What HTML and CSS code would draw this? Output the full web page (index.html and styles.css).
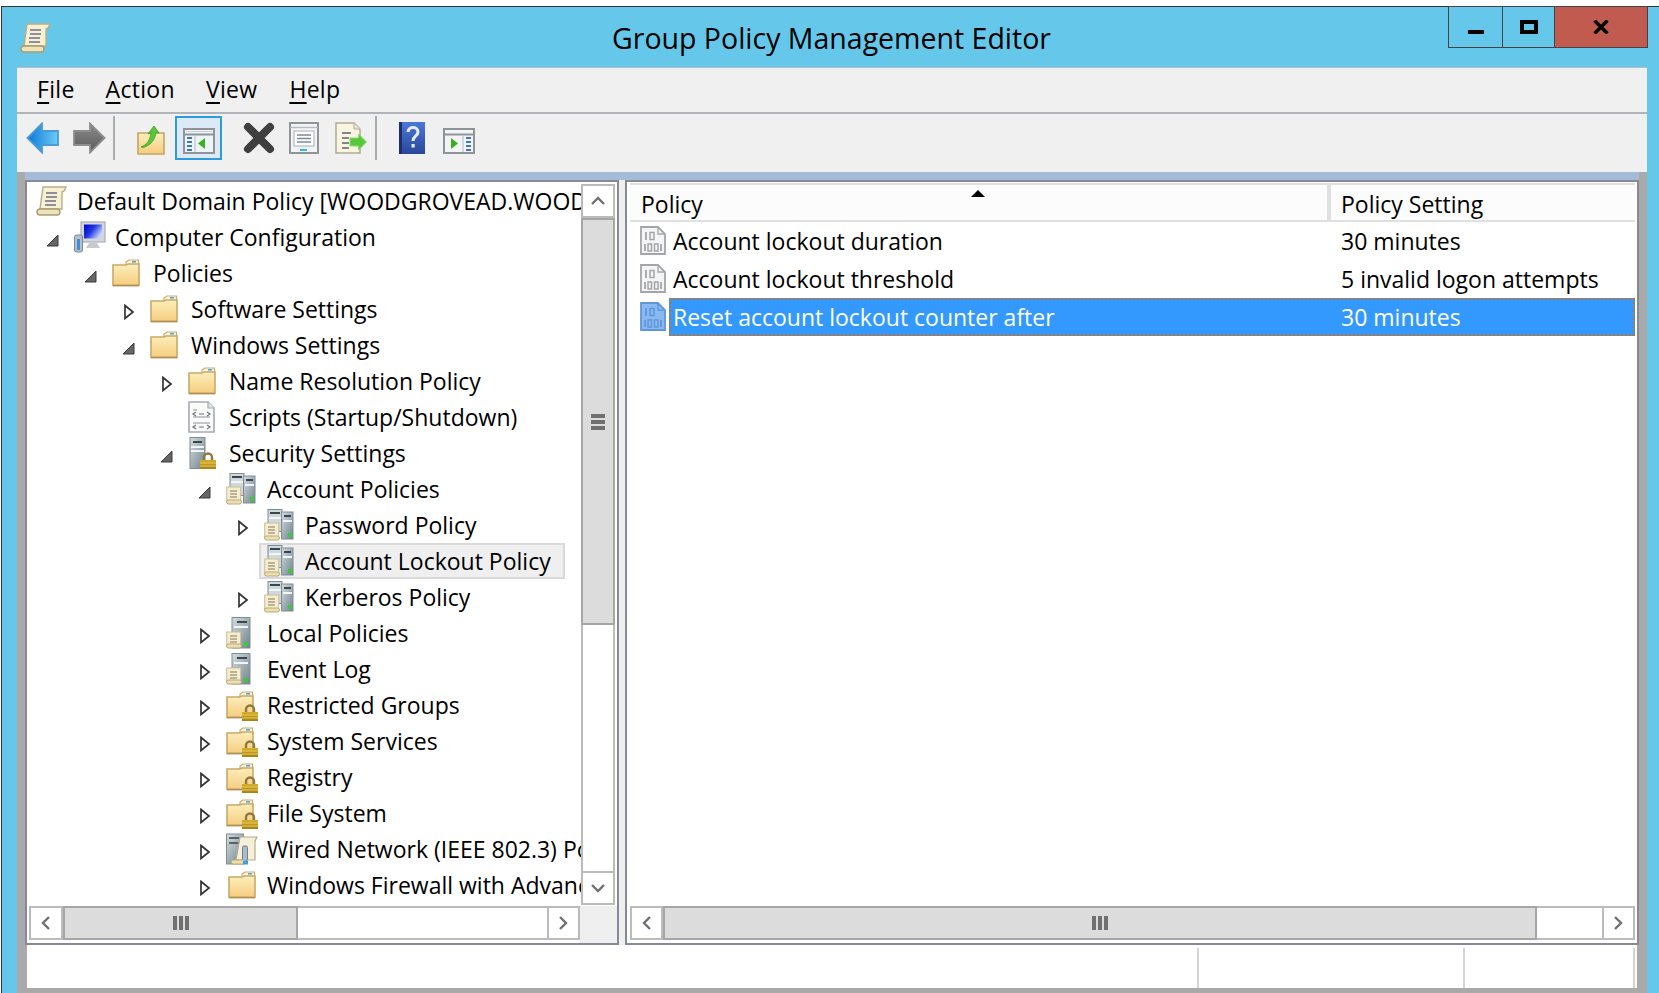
FILE: index.html
```html
<!DOCTYPE html>
<html lang="en">
<head>
<meta charset="utf-8">
<title>Group Policy Management Editor</title>
<link rel="stylesheet" href="styles.css">
</head>
<body>
<svg class="sprite" xmlns="http://www.w3.org/2000/svg">
  <defs>
    <linearGradient id="gFolder" x1="0" y1="0" x2="0" y2="1"><stop offset="0" stop-color="#fdeebb"/><stop offset="1" stop-color="#f5cd7e"/></linearGradient>
    <linearGradient id="gTower" x1="0" y1="0" x2="1" y2="1"><stop offset="0" stop-color="#d5dde0"/><stop offset="1" stop-color="#6f838c"/></linearGradient>
    <linearGradient id="gLock" x1="0" y1="0" x2="0" y2="1"><stop offset="0" stop-color="#d6ae2c"/><stop offset="1" stop-color="#a68210"/></linearGradient>
    <linearGradient id="gBlue" x1="0" y1="0" x2="1" y2="0"><stop offset="0" stop-color="#0a78d8"/><stop offset="1" stop-color="#6fcbf5"/></linearGradient>
    <linearGradient id="gGray" x1="0" y1="0" x2="0" y2="1"><stop offset="0" stop-color="#8a8a8a"/><stop offset="1" stop-color="#5c5c5c"/></linearGradient>
    <linearGradient id="gHelp" x1="0" y1="0" x2="0" y2="1"><stop offset="0" stop-color="#4a78d8"/><stop offset="1" stop-color="#2a4699"/></linearGradient>
    <linearGradient id="gScreen" x1="0" y1="0" x2="1" y2="0.600"><stop offset="0" stop-color="#0000d0"/><stop offset=".5" stop-color="#2038e0"/><stop offset="1" stop-color="#c8d4f8"/></linearGradient>
  </defs>

  <symbol id="open" viewBox="0 0 14 16"><path d="M12 3v11H1z" fill="#666" stroke="#3a3a3a" stroke-width="1"/></symbol>
  <symbol id="closed" viewBox="0 0 14 16"><path d="M3 1.500l8 6.500-8 6.500z" fill="#fff" stroke="#333" stroke-width="1.700"/></symbol>

  <symbol id="scroll" viewBox="0 0 32 32">
    <path d="M7 2h23l-2 4-2 1v17H4z" fill="#f7f1d2" stroke="#b8ad8a" stroke-width="1.400"/>
    <path d="M10 8h11M10 12h11M9 16h11M9 20h11" stroke="#8e8e9c" stroke-width="1.800"/>
    <rect x="1" y="24" width="23" height="6" rx="3" fill="#ece3b6" stroke="#a99b72" stroke-width="1.400"/>
  </symbol>

  <symbol id="folder" viewBox="0 0 32 32">
    <path d="M14 5l3-2h9.500v6H14z" fill="#fdf6dc" stroke="#c9ab6d" stroke-width="1.200"/>
    <rect x="20" y="4" width="4" height="1.600" fill="#4ea6e6"/>
    <path d="M1 8h13l2-1h11v21.500H1z" fill="url(#gFolder)" stroke="#c8a96a" stroke-width="1.600"/>
    <path d="M1 28.500h26" stroke="#ad8f54" stroke-width="1.500"/>
  </symbol>

  <symbol id="lock" viewBox="0 0 32 32">
    <path d="M20 24v-3.500a4 4 0 0 1 8 0V24" fill="none" stroke="#8c7a3c" stroke-width="2.400"/>
    <rect x="16" y="23" width="16" height="9" fill="url(#gLock)"/>
    <path d="M16 26h16M16 29h16" stroke="#e6ca60" stroke-width="1"/>
  </symbol>

  <symbol id="folderlock" viewBox="0 0 32 32">
    <use href="#folder" width="32" height="32"/>
    <use href="#lock" width="32" height="32"/>
  </symbol>

  <symbol id="tower1" viewBox="0 0 32 32">
    <rect x="6" y="0.500" width="18" height="30.500" fill="url(#gTower)" stroke="#7e8e95" stroke-width="1"/>
    <path d="M11 5h10" stroke="#39474d" stroke-width="2"/>
    <path d="M8 10h14" stroke="#f2f5f6" stroke-width="2"/>
    <rect x="0.700" y="15" width="14" height="13" fill="#f5edcd" stroke="#cdbf94" stroke-width="1"/>
    <path d="M4 19h7M4 22h7M4 25h7" stroke="#a99f86" stroke-width="1.400"/>
    <rect x="0.500" y="27" width="15" height="4" rx="2" fill="#ece0b0" stroke="#b8a878"/>
    <rect x="18" y="25" width="4" height="4" fill="#3ec83a"/>
  </symbol>

  <symbol id="tower2" viewBox="0 0 32 32">
    <rect x="4" y="0.500" width="14" height="22" fill="#cfd8dc" stroke="#7e8e95" stroke-width="1"/>
    <rect x="17.500" y="3" width="11.500" height="27" fill="url(#gTower)" stroke="#7e8e95" stroke-width="1"/>
    <path d="M6 4h10M20 7h7" stroke="#39474d" stroke-width="2"/>
    <path d="M5 9h12M19 12h9" stroke="#f2f5f6" stroke-width="2"/>
    <rect x="0.700" y="14" width="14" height="14" fill="#f5edcd" stroke="#cdbf94" stroke-width="1"/>
    <path d="M4 18h7M4 21h7M4 24h7" stroke="#a99f86" stroke-width="1.400"/>
    <rect x="0.500" y="27" width="15" height="4" rx="2" fill="#ece0b0" stroke="#b8a878"/>
    <rect x="24" y="24" width="4" height="4" fill="#3ec83a"/>
  </symbol>

  <symbol id="seclock" viewBox="0 0 32 32">
    <rect x="2" y="0.500" width="15" height="31" fill="url(#gTower)" stroke="#7e8e95" stroke-width="1"/>
    <path d="M5 5h9" stroke="#39474d" stroke-width="2"/>
    <path d="M3 10h13M3 14h13" stroke="#f2f5f6" stroke-width="2"/>
    <g transform="translate(-4 0)"><use href="#lock" width="32" height="32"/></g>
  </symbol>

  <symbol id="computer" viewBox="0 0 32 32">
    <rect x="7" y="1" width="24" height="20" fill="#d4d8dc" stroke="#9ca2a8" stroke-width="1"/>
    <rect x="10" y="3.500" width="18" height="14" fill="url(#gScreen)"/>
    <path d="M15 22h8l3 5H12z" fill="#c8ccd0"/>
    <rect x="0.500" y="14" width="8" height="17" rx="2" fill="#b6c0c8" stroke="#7d8790"/>
    <rect x="3" y="18" width="3" height="11" fill="#3f8fd8"/>
  </symbol>

  <symbol id="scripts" viewBox="0 0 32 32">
    <path d="M1 1h19l6 6v24H1z" fill="#fbfbfb" stroke="#a6abb0" stroke-width="1.600"/>
    <path d="M20 1v6h6" fill="#e4e6e8" stroke="#a6abb0" stroke-width="1.200"/>
    <path d="M5 9h4M5 16h17M5 22h17" stroke="#8d9299" stroke-width="1.200"/>
    <path d="M8 11l-3 2 3 2M19 11l3 2-3 2M8 24l-3 2 3 2M19 24l3 2-3 2M11 13h5M11 26h5" fill="none" stroke="#6d7279" stroke-width="1.200"/>
  </symbol>

  <symbol id="wired" viewBox="0 0 32 32">
    <rect x="0.500" y="1" width="17" height="30" fill="url(#gTower)" stroke="#7e8e95"/>
    <path d="M3 5h10M3 10h12" stroke="#39474d" stroke-width="1.600"/>
    <path d="M14 4h17l-2 4v19H10z" fill="#f6f0d8" stroke="#b4aa8e" stroke-width="1.200"/>
    <rect x="16.500" y="13" width="5" height="15" rx="1.500" fill="#a9bcc8" stroke="#6e808c"/>
    <rect x="5" y="27" width="14" height="4" rx="2" fill="#ece0b0" stroke="#b8a878"/>
    <rect x="17" y="28" width="5" height="3.500" fill="#3f9fd8"/>
  </symbol>

  <symbol id="bin" viewBox="0 0 26 30">
    <path class="bin-body" d="M1 1h17l7 7v20H1z" stroke="currentColor" stroke-width="1.800"/>
    <path d="M18 1v7h7" fill="none" stroke="currentColor" stroke-width="1.300"/>
    <path d="M6 6v8M5 18v7M21 18v7" stroke="currentColor" stroke-width="1.800"/>
    <rect x="10" y="6.500" width="4" height="7" fill="none" stroke="currentColor" stroke-width="1.500"/>
    <rect x="8" y="18" width="3.500" height="7" fill="none" stroke="currentColor" stroke-width="1.500"/>
    <rect x="14.500" y="18" width="3.500" height="7" fill="none" stroke="currentColor" stroke-width="1.500"/>
  </symbol>
</svg>

<div class="window">
  <header class="titlebar">
    <svg class="title-icon"><use href="#scroll"/></svg>
    <h1 class="title">Group Policy Management Editor</h1>
    <div class="caption">
      <div class="cap cap-min"><svg class="cap-glyph" viewBox="0 0 16 4"><rect width="16" height="4"/></svg></div>
      <div class="cap cap-max"><svg class="cap-glyph cap-glyph-max" viewBox="0 0 18 14"><path d="M2 2h14v10H2z" fill="none" stroke="#000" stroke-width="4"/></svg></div>
      <div class="cap cap-close"><svg class="cap-glyph cap-glyph-x" viewBox="0 0 16 14"><path d="M1.500 0.500L14.500 13.500M14.500 0.500L1.500 13.500" stroke="#000" stroke-width="3.400" fill="none"/></svg></div>
    </div>
  </header>

  <div class="client">
    <nav class="menubar">
      <span class="menu m-file"><span class="ak">F</span>ile</span>
      <span class="menu m-action"><span class="ak">A</span>ction</span>
      <span class="menu m-view"><span class="ak">V</span>iew</span>
      <span class="menu m-help"><span class="ak">H</span>elp</span>
    </nav>

    <div class="toolbar">
      <svg class="tb tb-back" viewBox="0 0 34 32"><path d="M1.500 16L16 1.500V9h16v14H16v7.500z" fill="url(#gBlue)" stroke="#4a9ad8" stroke-width="1.800"/></svg>
      <svg class="tb tb-fwd" viewBox="0 0 34 32"><path d="M32.500 16L18 1.500V9H2v14h16v7.500z" fill="url(#gGray)" stroke="#8e8e8e" stroke-width="1.800"/></svg>
      <span class="tb-sep tb-sep-1"></span>
      <svg class="tb tb-up" viewBox="0 0 28 30">
        <path d="M1 8h26v21H1z" fill="url(#gFolder)" stroke="#c4a564" stroke-width="1.600"/>
        <path d="M4 22C10 20 13 15 14 8l-3 1 6-8 5 7-3-.5c-1 8-6 13-13 15z" fill="#58c83a" stroke="#3c9c28" stroke-width=".8"/>
      </svg>
      <div class="tb-active">
        <svg class="tb tb-console" viewBox="0 0 32 26">
          <rect x="1" y="1" width="30" height="24" fill="#eef3f8" stroke="#8f9498" stroke-width="2"/>
          <path d="M1 6.500h30" stroke="#8f9498" stroke-width="2"/>
          <path d="M3 3.500h26" stroke="#d0d4d8"/>
          <path d="M4 10h5M4 14h5M4 18h5M4 22h5" stroke="#3f78b8" stroke-width="2"/>
          <path d="M12 8v16" stroke="#b8bcc0"/>
          <path d="M22 10v11l-7-5.500z" fill="#38b020"/>
        </svg>
      </div>
      <svg class="tb tb-x" viewBox="0 0 32 32"><path d="M5 5l22 22M27 5L5 27" stroke="#3f3f3f" stroke-width="8" stroke-linecap="round"/></svg>
      <svg class="tb tb-props" viewBox="0 0 30 32">
        <rect x="1" y="1" width="28" height="30" fill="#f2f4f6" stroke="#8f9498" stroke-width="2"/>
        <path d="M1 5.500h28" stroke="#b8bcc0" stroke-width="1.500"/>
        <rect x="5" y="9" width="20" height="15" fill="#fff" stroke="#a8acb0"/>
        <path d="M8 13h14M8 16.500h14M8 20h14" stroke="#7a8a98" stroke-width="1.500"/>
        <rect x="11" y="27" width="7" height="2" fill="#2fb8e8"/>
      </svg>
      <svg class="tb tb-export" viewBox="0 0 32 32">
        <path d="M1 1h18l6 6v24H1z" fill="#f9f5e0" stroke="#b0aa98" stroke-width="1.500"/>
        <path d="M19 1v6h6" fill="#e8e4d0" stroke="#b0aa98"/>
        <path d="M7 11h9M7 16h7M7 21h7M7 26h7" stroke="#5c6068" stroke-width="1.500"/>
        <path d="M31.500 20l-8-8v4H15v8h8.500v4z" fill="#58c83a" stroke="#8cd878"/>
      </svg>
      <span class="tb-sep tb-sep-2"></span>
      <svg class="tb tb-help" viewBox="0 0 26 32">
        <rect width="26" height="32" fill="url(#gHelp)"/>
        <rect x="0" y="0" width="3" height="32" fill="#1c2f74"/>
        <path d="M9 10c0-6 10-6 10 0 0 4-5 4-5 9" fill="none" stroke="#e8ecf8" stroke-width="3"/>
        <rect x="12.500" y="22" width="3.200" height="3.500" fill="#e8ecf8"/>
      </svg>
      <svg class="tb tb-view" viewBox="0 0 32 26">
        <rect x="1" y="1" width="30" height="24" fill="#f2f4f6" stroke="#8f9498" stroke-width="2"/>
        <path d="M1 6.500h30" stroke="#8f9498" stroke-width="2"/>
        <path d="M23 10h5M23 14h5M23 18h5M23 22h5" stroke="#3f78b8" stroke-width="2"/>
        <path d="M20 8v16" stroke="#b8bcc0"/>
        <path d="M8 10v11l7-5.500z" fill="#38b020"/>
      </svg>
    </div>

    <div class="workspace">
      <div class="band"></div>
      <div class="panes">
        <section class="pane pane-tree">
          <ul class="tree">
            <li class="row l0"><span class="exp"></span><span class="node"><svg class="ic"><use href="#scroll"/></svg><span class="label">Default Domain Policy [WOODGROVEAD.WOOD</span></span></li>
            <li class="row l1"><span class="exp"><svg class="tw"><use href="#open"/></svg></span><span class="node"><svg class="ic"><use href="#computer"/></svg><span class="label">Computer Configuration</span></span></li>
            <li class="row l2"><span class="exp"><svg class="tw"><use href="#open"/></svg></span><span class="node"><svg class="ic"><use href="#folder"/></svg><span class="label">Policies</span></span></li>
            <li class="row l3"><span class="exp"><svg class="tw"><use href="#closed"/></svg></span><span class="node"><svg class="ic"><use href="#folder"/></svg><span class="label">Software Settings</span></span></li>
            <li class="row l3"><span class="exp"><svg class="tw"><use href="#open"/></svg></span><span class="node"><svg class="ic"><use href="#folder"/></svg><span class="label">Windows Settings</span></span></li>
            <li class="row l4"><span class="exp"><svg class="tw"><use href="#closed"/></svg></span><span class="node"><svg class="ic"><use href="#folder"/></svg><span class="label">Name Resolution Policy</span></span></li>
            <li class="row l4"><span class="exp"></span><span class="node"><svg class="ic"><use href="#scripts"/></svg><span class="label">Scripts (Startup/Shutdown)</span></span></li>
            <li class="row l4"><span class="exp"><svg class="tw"><use href="#open"/></svg></span><span class="node"><svg class="ic"><use href="#seclock"/></svg><span class="label">Security Settings</span></span></li>
            <li class="row l5"><span class="exp"><svg class="tw"><use href="#open"/></svg></span><span class="node"><svg class="ic"><use href="#tower2"/></svg><span class="label">Account Policies</span></span></li>
            <li class="row l6"><span class="exp"><svg class="tw"><use href="#closed"/></svg></span><span class="node"><svg class="ic"><use href="#tower2"/></svg><span class="label">Password Policy</span></span></li>
            <li class="row l6"><span class="exp"></span><span class="node node-sel"><svg class="ic"><use href="#tower2"/></svg><span class="label">Account Lockout Policy</span></span></li>
            <li class="row l6"><span class="exp"><svg class="tw"><use href="#closed"/></svg></span><span class="node"><svg class="ic"><use href="#tower2"/></svg><span class="label">Kerberos Policy</span></span></li>
            <li class="row l5"><span class="exp"><svg class="tw"><use href="#closed"/></svg></span><span class="node"><svg class="ic"><use href="#tower1"/></svg><span class="label">Local Policies</span></span></li>
            <li class="row l5"><span class="exp"><svg class="tw"><use href="#closed"/></svg></span><span class="node"><svg class="ic"><use href="#tower1"/></svg><span class="label">Event Log</span></span></li>
            <li class="row l5"><span class="exp"><svg class="tw"><use href="#closed"/></svg></span><span class="node"><svg class="ic"><use href="#folderlock"/></svg><span class="label">Restricted Groups</span></span></li>
            <li class="row l5"><span class="exp"><svg class="tw"><use href="#closed"/></svg></span><span class="node"><svg class="ic"><use href="#folderlock"/></svg><span class="label">System Services</span></span></li>
            <li class="row l5"><span class="exp"><svg class="tw"><use href="#closed"/></svg></span><span class="node"><svg class="ic"><use href="#folderlock"/></svg><span class="label">Registry</span></span></li>
            <li class="row l5"><span class="exp"><svg class="tw"><use href="#closed"/></svg></span><span class="node"><svg class="ic"><use href="#folderlock"/></svg><span class="label">File System</span></span></li>
            <li class="row l5"><span class="exp"><svg class="tw"><use href="#closed"/></svg></span><span class="node"><svg class="ic"><use href="#wired"/></svg><span class="label">Wired Network (IEEE 802.3) Po</span></span></li>
            <li class="row l5"><span class="exp"><svg class="tw"><use href="#closed"/></svg></span><span class="node"><svg class="ic"><use href="#folder" x="2"/></svg><span class="label">Windows Firewall with Advanc</span></span></li>
          </ul>

          <div class="vscroll">
            <div class="sb-btn sb-btn-v"><svg class="chev" viewBox="0 0 14 14"><path d="M1 10l6-6 6 6" fill="none" stroke="#707070" stroke-width="2.400"/></svg></div>
            <div class="thumb thumb-v"><span class="grip-v"></span><span class="grip-v"></span><span class="grip-v"></span></div>
            <div class="v-track"></div>
            <div class="sb-btn sb-btn-v"><svg class="chev" viewBox="0 0 14 14"><path d="M1 4l6 6 6-6" fill="none" stroke="#707070" stroke-width="2.400"/></svg></div>
          </div>

          <div class="hscroll hscroll-left">
            <div class="sb-btn sb-btn-h sb-btn-first"><svg class="chev" viewBox="0 0 14 14"><path d="M10 1L4 7l6 6" fill="none" stroke="#707070" stroke-width="2.400"/></svg></div>
            <div class="thumb thumb-h thumb-h-left"><span class="grip-h"></span><span class="grip-h"></span><span class="grip-h"></span></div>
            <div class="h-track"></div>
            <div class="sb-btn sb-btn-h"><svg class="chev" viewBox="0 0 14 14"><path d="M3 1l6 6-6 6" fill="none" stroke="#707070" stroke-width="2.400"/></svg></div>
          </div>
          <div class="corner"></div>
        </section>

        <section class="pane pane-list">
          <div class="lv-head">
            <div class="lv-col lv-col-1">Policy<span class="sort"></span></div>
            <div class="lv-col lv-col-2">Policy Setting</div>
          </div>
          <div class="lv-rows">
            <div class="lv-row">
              <svg class="lv-ic"><use href="#bin"/></svg>
              <div class="lv-cells"><span class="cell cell-1">Account lockout duration</span><span class="cell">30 minutes</span></div>
            </div>
            <div class="lv-row">
              <svg class="lv-ic"><use href="#bin"/></svg>
              <div class="lv-cells"><span class="cell cell-1">Account lockout threshold</span><span class="cell">5 invalid logon attempts</span></div>
            </div>
            <div class="lv-row lv-row-sel">
              <svg class="lv-ic"><use href="#bin"/></svg>
              <div class="lv-cells"><span class="cell cell-1">Reset account lockout counter after</span><span class="cell">30 minutes</span></div>
            </div>
          </div>
          <div class="hscroll hscroll-right">
            <div class="sb-btn sb-btn-h"><svg class="chev" viewBox="0 0 14 14"><path d="M10 1L4 7l6 6" fill="none" stroke="#707070" stroke-width="2.400"/></svg></div>
            <div class="thumb thumb-h thumb-h-right"><span class="grip-h"></span><span class="grip-h"></span><span class="grip-h"></span></div>
            <div class="h-track"></div>
            <div class="sb-btn sb-btn-h"><svg class="chev" viewBox="0 0 14 14"><path d="M3 1l6 6-6 6" fill="none" stroke="#707070" stroke-width="2.400"/></svg></div>
          </div>
        </section>
      </div>

      <footer class="status">
        <div class="st st-1"></div>
        <div class="st st-2"></div>
        <div class="st st-3"></div>
      </footer>
    </div>
  </div>
</div>
</body>
</html>
```
FILE: styles.css
```css
* { box-sizing: border-box; }
html, body { margin: 0; padding: 0; height: 100%; overflow: hidden; background: #fff; }
body {
  font-family: "Open Sans", "Noto Sans", "Liberation Sans", sans-serif;
  font-size: 23px;
  color: #000;
  padding: 6px 0 0 1px;
}
.sprite { position: absolute; width: 0; height: 0; overflow: hidden; }
.bin-body { fill: var(--bin-fill, #f5f5f5); }

.window {
  height: 987px;
  background: #65c8eb;
  border-top: 1px solid #333;
  border-left: 1px solid #333;
  display: flex;
  flex-direction: column;
}

/* title bar */
.titlebar {
  height: 60px;
  flex: none;
  position: relative;
  display: flex;
  justify-content: center;
  padding-left: 2px;
}
.title-icon { position: absolute; left: 18px; top: 15px; width: 32px; height: 32px; }
.title {
  margin: 12px 0 0;
  font-size: 28.500px;
  font-weight: 400;
  line-height: 38px;
  white-space: nowrap;
}
.caption { position: absolute; right: 11px; top: -1px; display: flex; height: 42px; }
.cap {
  height: 42px;
  border: 1px solid #444;
  border-left: 0;
  display: flex;
  align-items: center;
  justify-content: center;
}
.cap-min { width: 55px; border-left: 1px solid #444; }
.cap-max { width: 52px; }
.cap-close { width: 93px; background: #c15b50; }
.cap-glyph { width: 16px; height: 4px; margin-top: 10px; }
.cap-glyph-max { width: 18px; height: 14px; margin-top: 0; }
.cap-glyph-x { width: 16px; height: 14px; margin-top: 0; }

/* client */
.client {
  flex: 1;
  margin: 0 12px 0 15px;
  display: flex;
  flex-direction: column;
  background: #f0f0f0;
  box-shadow: inset 0 1px 0 #b4c0c8;
}
.menubar {
  height: 47px;
  flex: none;
  border-bottom: 2px solid #b1b5b9;
  padding-bottom: 2px;
  display: flex;
  align-items: center;
}
.menu { font-size: 23px; letter-spacing: 0.3px; line-height: 44px; white-space: nowrap; }
.m-file { margin-left: 20px; }
.m-action { margin-left: 31px; }
.m-view { margin-left: 31px; }
.m-help { margin-left: 32px; }
.ak { text-decoration: underline; text-decoration-thickness: 2px; text-underline-offset: 4px; }

.toolbar {
  height: 58px;
  flex: none;
  padding-bottom: 10px;
  display: flex;
  align-items: center;
}
.tb { display: block; flex: none; }
.tb-back { width: 34px; height: 32px; margin-left: 9px; }
.tb-fwd { width: 34px; height: 32px; margin-left: 12px; }
.tb-sep { width: 2px; height: 44px; background: #a9adb0; flex: none; }
.tb-sep-1 { margin-left: 7px; }
.tb-up { width: 28px; height: 30px; margin-left: 22px; margin-top: 4px; }
.tb-active {
  width: 47px;
  height: 44px;
  margin-left: 10px;
  border: 2px solid #2b9bdb;
  background: #dceaf8;
  display: flex;
  align-items: center;
  justify-content: center;
}
.tb-console { width: 32px; height: 26px; margin-top: 6px; }
.tb-x { width: 32px; height: 32px; margin-left: 21px; }
.tb-props { width: 30px; height: 32px; margin-left: 14px; }
.tb-export { width: 32px; height: 32px; margin-left: 16px; }
.tb-sep-2 { margin-left: 8px; }
.tb-help { width: 26px; height: 32px; margin-left: 22px; }
.tb-view { width: 32px; height: 26px; margin-left: 18px; margin-top: 6px; }

/* workspace */
.workspace {
  flex: 1;
  background: #a9a9a9;
  padding: 0 8px 5px;
  display: flex;
  flex-direction: column;
}
.band { height: 8px; flex: none; background: #a4bcd8; }
.panes {
  height: 765px;
  flex: none;
  display: flex;
  gap: 6px;
  background: #efefef;
}
.pane { background: #fff; border: 2px solid #868a96; flex: none; }
.pane-tree {
  width: 594px;
  display: grid;
  grid-template-columns: 554px 36px;
  grid-template-rows: 724px 37px;
}
.pane-list { width: 1014px; display: flex; flex-direction: column; }

/* tree */
.tree {
  list-style: none;
  margin: 0;
  padding: 1px 0 0;
  overflow: hidden;
  grid-column: 1;
  grid-row: 1;
}
.row { height: 36px; display: flex; align-items: center; white-space: nowrap; }
.l0 { padding-left: 0; }
.l0 .exp { width: 2px; }
.l1 { padding-left: 12px; }
.l2 { padding-left: 50px; }
.l3 { padding-left: 88px; }
.l4 { padding-left: 126px; }
.l5 { padding-left: 164px; }
.l6 { padding-left: 202px; }
.exp { width: 28px; height: 36px; flex: none; display: flex; align-items: center; justify-content: center; }
.tw { width: 14px; height: 16px; margin-top: 6px; }
.node {
  flex: none;
  height: 36px;
  margin-left: 2px;
  border: 2px solid transparent;
  padding: 0 6px 0 3px;
  display: flex;
  align-items: center;
  gap: 9px;
}
.node-sel { background: #efefef; border-color: #d9d9d9; padding-right: 12px; }
.ic { width: 32px; height: 32px; flex: none; }
.label { line-height: 32px; }

/* scrollbars */
.vscroll {
  grid-column: 2;
  grid-row: 1;
  width: 34px;
  margin: 2px 0 1px;
  display: flex;
  flex-direction: column;
}
.sb-btn {
  background: #fff;
  border: 2px solid #bbb;
  flex: none;
  display: flex;
  align-items: center;
  justify-content: center;
}
.sb-btn-v { height: 34px; width: 34px; }
.sb-btn-h { width: 33px; height: 34px; }
.sb-btn-first { width: 34px; }
.chev { width: 14px; height: 14px; }
.thumb { background: #dcdcdc; border: 2px solid #a6a6a6; flex: none; display: flex; align-items: center; justify-content: center; }
.thumb-v { height: 407px; flex-direction: column; gap: 2px; }
.grip-v { width: 14px; height: 4px; background: #707070; }
.v-track { flex: 1; background: #fff; border-left: 2px solid #bbb; border-right: 2px solid #bbb; }
.thumb-h { height: 34px; gap: 2px; }
.thumb-h-left { width: 235px; }
.thumb-h-right { width: 874px; }
.grip-h { width: 4px; height: 14px; background: #707070; }
.h-track { flex: 1; background: #fff; border-top: 2px solid #bbb; border-bottom: 2px solid #bbb; }
.hscroll { display: flex; height: 34px; flex: none; }
.hscroll-left { grid-column: 1; grid-row: 2; margin: 0 1px 3px 2px; }
.hscroll-right { margin: 0 2px 3px 3px; }
.corner { grid-column: 2; grid-row: 2; background: #efefef; margin-left: -1px; }

/* list view */
.lv-head {
  margin: 1px 2px 0 3px;
  height: 39px;
  flex: none;
  background: #fcfcfc;
  border-top: 2px solid #e0e0e0;
  border-bottom: 2px solid #e0e0e0;
  display: flex;
}
.lv-col { line-height: 33px; padding: 3px 0 0 11px; white-space: nowrap; position: relative; }
.lv-col-1 { width: 701px; border-right: 4px solid #e0e0e0; }
.lv-col-2 { flex: 1; padding-left: 10px; }
.sort {
  position: absolute;
  left: 341px;
  top: 5px;
  width: 0;
  height: 0;
  border-left: 7px solid transparent;
  border-right: 7px solid transparent;
  border-bottom: 7px solid #000;
}
.lv-rows { flex: 1; margin: 0 2px 0 3px; min-height: 0; }
.lv-row { height: 38px; display: flex; align-items: center; color: #a2a6aa; }
.lv-ic { width: 26px; height: 30px; margin-left: 10px; margin-top: -1px; flex: none; }
.lv-cells { flex: 1; height: 38px; margin-left: 3px; display: flex; align-items: center; color: #000; }
.cell { padding-left: 4px; white-space: nowrap; line-height: 34px; }
.cell-1 { width: 668px; flex: none; }
.lv-row-sel { color: #5f97dc; --bin-fill: #8ab8f0; }
.lv-row-sel .lv-cells { background: #3399ff; color: #fff; outline: 2px dotted #c4701e; outline-offset: -2px; }

/* status bar */
.status {
  height: 43px;
  flex: none;
  background: #fff;
  border-left: 2px solid #a9a9a9;
  border-right: 2px solid #a9a9a9;
  display: flex;
  padding-top: 3px;
}
.st { height: 40px; border-right: 2px solid #d4d4d4; flex: none; }
.st-1 { width: 1172px; }
.st-2 { width: 266px; }
.st-3 { width: 170px; }
```
